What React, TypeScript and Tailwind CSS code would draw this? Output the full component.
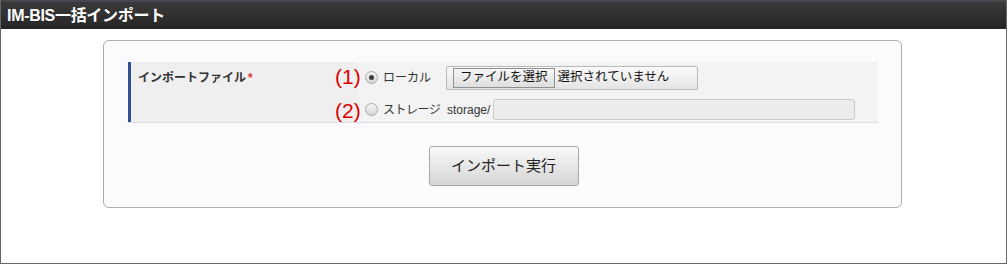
const jp = '"Liberation Sans", "Noto Sans CJK JP", sans-serif';

function Radio({ checked }: { checked?: boolean }) {
  return (
    <span className="flex h-[13px] w-[13px] shrink-0 items-center justify-center rounded-full border border-[#a8a8a8] bg-gradient-to-b from-[#f4f4f4] to-[#d8d8d8]">
      {checked && <span className="h-[5px] w-[5px] rounded-full bg-[#3c3c3c]" />}
    </span>
  );
}

export default function App() {
  return (
    <div className="relative h-[264px] w-[1007px] bg-white" style={{ fontFamily: jp }}>
      <div className="flex h-full flex-col border-x border-b border-[#666666]">
        <div className="flex h-[29px] items-center border-t-2 border-[#474752] bg-gradient-to-b from-[#3a3a3a] to-[#262626] pl-[6px]">
          <span className="text-[16px] font-bold tracking-[-0.3px] text-white">IM-BIS一括インポート</span>
        </div>

        <div className="pt-[11px] pl-[102px]">
          <div className="w-[799px] rounded-[6px] border border-[#acacac] bg-[#fbfbfd] pt-[21px] pb-[21px] pl-[24px]">
            <div className="relative flex h-[61px] w-[750px] border-b border-[#dcdcdc]">
              <div className="w-[3px] bg-[#2f4f91]" />
              <div className="w-[227px] bg-[#efefef] pt-[3px] pl-[7px]">
                <span className="whitespace-nowrap text-[12px] font-bold text-[#333333]">
                  インポートファイル<span className="ml-[2px] text-[#e03535]">*</span>
                </span>
              </div>
              <div className="flex flex-1 flex-col bg-[#f3f3f3] pl-[7px]">
                <div className="flex h-[31px] items-center">
                  <Radio checked />
                  <span className="ml-[5px] w-[63px] whitespace-nowrap text-[12px] text-[#333333]">ローカル</span>
                  <div className="flex h-[24px] w-[252px] items-center rounded-[2px] border border-[#b9b9b9] bg-gradient-to-b from-[#fafafa] to-[#e4e4e4] pl-[6px]">
                    <span className="flex h-[20px] items-center whitespace-nowrap border border-[#8f8f8f] bg-gradient-to-b from-[#f6f6f6] to-[#dedede] px-[6px] text-[12.5px] text-[#111111]">
                      ファイルを選択
                    </span>
                    <span className="ml-[3px] whitespace-nowrap text-[12.5px] text-[#111111]">選択されていません</span>
                  </div>
                </div>
                <div className="mt-[6px] flex h-[21px] items-center">
                  <Radio />
                  <span className="ml-[5px] w-[64px] whitespace-nowrap text-[12px] tracking-[-0.5px] text-[#333333]">ストレージ</span>
                  <span className="whitespace-nowrap text-[12px] text-[#333333]">storage/</span>
                  <div className="ml-[3px] h-[21px] w-[362px] rounded-[3px] border border-[#cbcbcb] bg-[#ececec]" />
                </div>
              </div>
              <span className="absolute left-[207px] top-[-1px] text-[21px] text-[#dd0000]">(1)</span>
              <span className="absolute left-[207px] top-[33px] text-[21px] text-[#dd0000]">(2)</span>
            </div>

            <div className="mt-[23px] flex justify-center pr-[22px]">
              <button className="h-[40px] w-[150px] rounded-[3px] border border-[#a9a9a9] bg-gradient-to-b from-[#f8f8f8] to-[#d6d6d6] text-[15px] text-[#222222]">
                インポート実行
              </button>
            </div>
          </div>
        </div>
      </div>
    </div>
  );
}
